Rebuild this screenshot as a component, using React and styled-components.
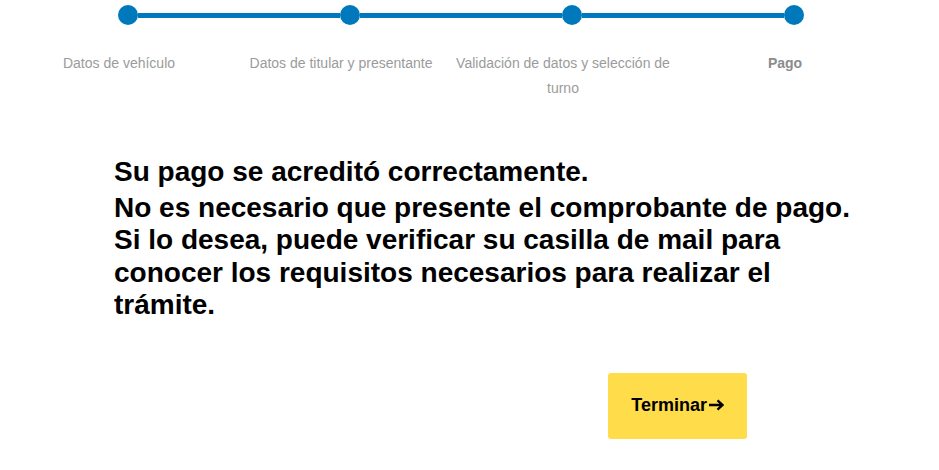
import { Fragment } from 'react'
import styled, { createGlobalStyle } from 'styled-components'

const GlobalStyle = createGlobalStyle`
  html, body {
    margin: 0;
    padding: 0;
    background: #fff;
    font-family: "Liberation Sans", Arial, sans-serif;
  }
`

const steps = [
  { label: 'Datos de vehículo' },
  { label: 'Datos de titular y presentante' },
  { label: 'Validación de datos y selección de turno' },
  { label: 'Pago', current: true },
]

const Page = styled.div`
  padding: 5px 0 0 8px;
`

const Stepper = styled.div`
  width: 888px;
`

const Track = styled.div`
  display: flex;
  align-items: center;
  margin-left: 110px;
  width: 686px;
  height: 20px;
`

const Dot = styled.span`
  flex: none;
  width: 20px;
  height: 20px;
  border-radius: 50%;
  background: #0079bc;
`

const Connector = styled.span`
  flex: 1;
  height: 5px;
  background: #0079bc;
`

const Labels = styled.div`
  display: grid;
  grid-template-columns: repeat(4, 222px);
  margin-top: 26px;
`

const Label = styled.div`
  padding: 0 2px;
  text-align: center;
  font-size: 14px;
  line-height: 25px;
  color: ${(p) => (p.$current ? '#8c8c8c' : '#9b9b9b')};
  font-weight: ${(p) => (p.$current ? 700 : 400)};
`

const Content = styled.div`
  padding-left: 106px;
  margin-top: 55px;
`

const Message = styled.div`
  max-width: 750px;
  font-size: 28px;
  line-height: 32.5px;
  font-weight: 700;
  color: #000;
`

const Lead = styled.div`
  padding-bottom: 3px;
`

const Actions = styled.div`
  display: flex;
  justify-content: flex-end;
  width: 633px;
  margin-top: 51px;
`

const Button = styled.button`
  display: flex;
  align-items: center;
  gap: 1px;
  height: 66px;
  padding: 0 23px 0 23px;
  border: 0;
  border-radius: 3px;
  background: #ffdc4a;
  color: #000;
  font-family: "Liberation Sans", Arial, sans-serif;
  font-size: 18px;
  font-weight: 700;
  cursor: pointer;
`

const Arrow = () => (
  <svg width="16" height="12" viewBox="0 0 16 12" fill="none" style={{ marginTop: -2 }}>
    <path d="M1 6h13.5M9.5 1.3 14.5 6l-5 4.7" stroke="#000" strokeWidth="2.3" />
  </svg>
)

export default function App() {
  return (
    <Page>
      <GlobalStyle />
      <Stepper>
        <Track>
          {steps.map((s, i) => (
            <Fragment key={s.label}>
              {i > 0 && <Connector />}
              <Dot />
            </Fragment>
          ))}
        </Track>
        <Labels>
          {steps.map((s) => (
            <Label key={s.label} $current={s.current}>
              {s.label}
            </Label>
          ))}
        </Labels>
      </Stepper>
      <Content>
        <Message>
          <Lead>Su pago se acreditó correctamente.</Lead>
          No es necesario que presente el comprobante de pago.
          <br />
          Si lo desea, puede verificar su casilla de mail para conocer los
          requisitos necesarios para realizar el trámite.
        </Message>
        <Actions>
          <Button>
            Terminar
            <Arrow />
          </Button>
        </Actions>
      </Content>
    </Page>
  )
}
